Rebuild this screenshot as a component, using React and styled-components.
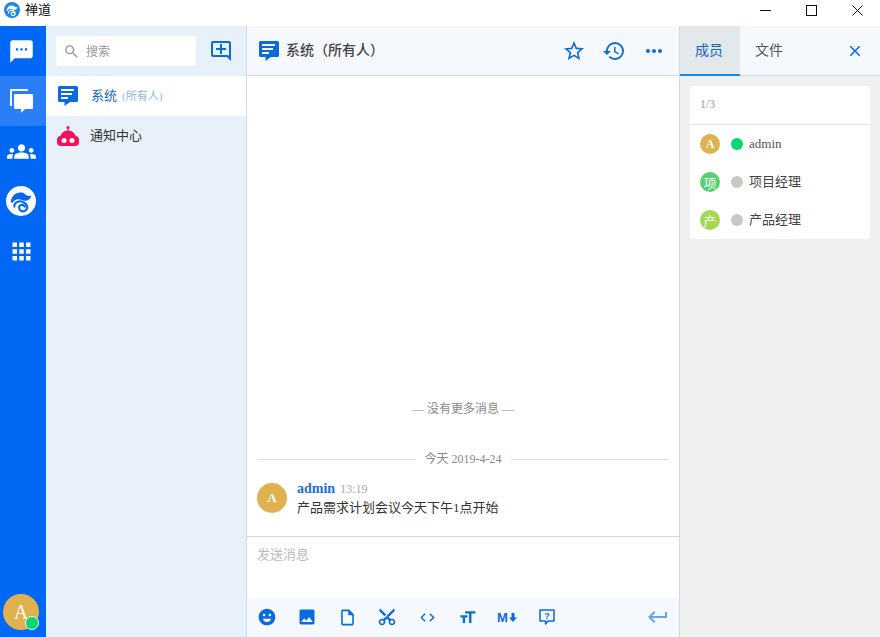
import React from "react";
import styled, { createGlobalStyle } from "styled-components";
import {
  MdSms,
  MdGroups,
  MdApps,
  MdSearch,
  MdOutlineAddComment,
  MdStarBorder,
  MdHistory,
  MdMoreHoriz,
  MdClose,
  MdEmojiEmotions,
  MdImage,
  MdOutlineInsertDriveFile,
  MdContentCut,
  MdCode,
  MdFormatSize,
  MdKeyboardReturn,
} from "react-icons/md";

const FONT = `"Liberation Serif", "Noto Sans CJK SC", serif`;
const BLUE = "#0b6bdc";

const GlobalStyle = createGlobalStyle`
  html, body { margin: 0; padding: 0; height: 100%; overflow: hidden; }
  body { font-family: ${FONT}; font-size: 13px; color: #333; background: #fff; }
  * { box-sizing: border-box; }
`;

const Window = styled.div`
  width: 880px;
  height: 637px;
  display: flex;
  flex-direction: column;
`;

const TitleBar = styled.div`
  height: 26px;
  flex: none;
  display: flex;
  align-items: flex-start;
  padding-left: 4px;
  background: #fff;
`;

const TitleLogo = styled.div`
  display: flex;
  margin-top: 2px;
`;

const TitleText = styled.span`
  margin-left: 5px;
  font-size: 13px;
  line-height: 20px;
  color: #111;
`;

const WindowButtons = styled.div`
  margin-left: auto;
  display: flex;
  height: 100%;
`;

const WindowButton = styled.div`
  width: 46px;
  height: 21px;
  display: flex;
  align-items: center;
  justify-content: center;
`;

const Body = styled.div`
  flex: 1;
  display: flex;
  min-height: 0;
`;

const NavBar = styled.nav`
  width: 46px;
  flex: none;
  background: #0068f5;
  display: flex;
  flex-direction: column;
`;

const NavItem = styled.div`
  width: 46px;
  height: 50px;
  padding-right: 4px;
  display: flex;
  align-items: center;
  justify-content: center;
  color: #fff;
  background: ${(p) => (p.$active ? "#2a7ff6" : "transparent")};
`;

const NavUser = styled.div`
  margin: auto 0 7px 3px;
  width: 36px;
  height: 36px;
  border-radius: 50%;
  background: #e0b24f;
  color: #fff;
  font-size: 20px;
  display: flex;
  align-items: center;
  justify-content: center;
  position: relative;
`;

const NavStatus = styled.span`
  position: absolute;
  right: 0;
  bottom: 0;
  width: 14px;
  height: 14px;
  border-radius: 50%;
  background: #00d96f;
  border: 1.5px solid #fff;
`;

const ListPanel = styled.aside`
  width: 201px;
  flex: none;
  background: #e8f0fa;
  border-right: 1px solid #d5d8dc;
  display: flex;
  flex-direction: column;
`;

const SearchRow = styled.div`
  height: 50px;
  display: flex;
  align-items: center;
  padding: 0 13px 0 10px;
  justify-content: space-between;
`;

const SearchBox = styled.div`
  width: 140px;
  height: 30px;
  background: #fff;
  border-radius: 3px;
  display: flex;
  align-items: center;
  padding-left: 7px;
  gap: 6px;
  color: #999;
  font-size: 12px;
`;

const ChatRow = styled.div`
  height: 40px;
  display: flex;
  align-items: center;
  padding-left: ${(p) => (p.$active ? 12 : 11)}px;
  background: ${(p) => (p.$active ? "#fff" : "transparent")};
`;

const ChatLabel = styled.div`
  margin-left: ${(p) => p.$gap}px;
  display: flex;
  align-items: baseline;
  padding-bottom: 4px;
`;

const ChatName = styled.span`
  font-size: 13px;
  color: ${(p) => (p.$active ? "#1565c0" : "#333")};
`;

const ChatNote = styled.span`
  margin-left: 5px;
  font-size: 11px;
  color: #8db6e8;
`;

const ChatPanel = styled.main`
  width: 433px;
  flex: none;
  display: flex;
  flex-direction: column;
  border-right: 1px solid #d5d8dc;
  background: #fff;
`;

const ChatHeader = styled.header`
  height: 50px;
  flex: none;
  background: #f5f9fd;
  border-bottom: 1px solid #d5d8dc;
  display: flex;
  align-items: center;
  padding: 0 13px 0 12px;
`;

const ChatTitle = styled.h1`
  margin: 0 0 0 7px;
  padding-bottom: 4px;
  font-size: 14px;
  font-weight: 500;
  color: #444;
`;

const HeaderActions = styled.div`
  margin-left: auto;
  display: flex;
  align-items: center;
  gap: 16px;
  color: ${BLUE};
`;

const Messages = styled.section`
  flex: 1;
  min-height: 0;
  display: flex;
  flex-direction: column;
  justify-content: flex-end;
  padding: 0 10px 18px;
`;

const NoMore = styled.div`
  text-align: center;
  color: #888;
  font-size: 12px;
  line-height: 16px;
`;

const DateLine = styled.div`
  display: flex;
  align-items: center;
  margin-top: 34px;
  color: #888;
  font-size: 12px;
  line-height: 16px;
  gap: 9px;
  &::before,
  &::after {
    content: "";
    flex: 1;
    height: 1px;
    background: #dcdfe2;
  }
`;

const Message = styled.div`
  display: flex;
  margin-top: 13px;
  gap: 10px;
`;

const Avatar = styled.div`
  width: ${(p) => p.$size}px;
  height: ${(p) => p.$size}px;
  flex: none;
  border-radius: 50%;
  background: ${(p) => p.$color};
  color: #fff;
  font-size: ${(p) => p.$font}px;
  font-weight: ${(p) => (p.$bold ? 700 : 400)};
  display: flex;
  align-items: center;
  justify-content: center;
`;

const MessageAvatar = styled(Avatar)`
  margin-top: 3px;
`;

const MessageHead = styled.div`
  display: flex;
  align-items: baseline;
  gap: 5px;
  line-height: 18px;
`;

const Sender = styled.span`
  color: #1a6fd8;
  font-weight: 700;
  font-size: 14px;
`;

const Time = styled.span`
  color: #aaa;
  font-size: 12px;
`;

const MessageText = styled.div`
  font-size: 13px;
  line-height: 20px;
  color: #333;
`;

const Composer = styled.div`
  height: 101px;
  flex: none;
  border-top: 1px solid #d5d8dc;
  display: flex;
  flex-direction: column;
`;

const Placeholder = styled.div`
  flex: 1;
  padding: 9px 10px;
  color: #bbb;
  font-size: 13px;
  line-height: 18px;
`;

const Toolbar = styled.div`
  height: 39px;
  flex: none;
  background: #f5f9fd;
  display: flex;
  align-items: center;
  color: ${BLUE};
  padding-bottom: 1px;
`;

const ToolButton = styled.div`
  width: 40px;
  display: flex;
  align-items: center;
  justify-content: center;
`;

const ScissorsIcon = styled(MdContentCut)`
  transform: rotate(-90deg);
`;

const MarkdownMark = styled.span`
  display: inline-flex;
  align-items: center;
  gap: 1px;
  font-family: "Liberation Sans", sans-serif;
  font-weight: 700;
  font-size: 13px;
`;

const SendButton = styled.div`
  margin-left: auto;
  margin-right: 9px;
  display: flex;
  color: #6ba3ea;
`;

const SidePanel = styled.aside`
  flex: 1;
  background: #f0f0f0;
  display: flex;
  flex-direction: column;
`;

const Tabs = styled.div`
  height: 50px;
  flex: none;
  display: flex;
  align-items: stretch;
  background: #f5f9fd;
  border-bottom: 1px solid #d5d8dc;
`;

const Tab = styled.div`
  width: 60px;
  display: flex;
  align-items: center;
  justify-content: center;
  padding: 0 2px 2px 0;
  font-size: 14px;
  margin-bottom: -1px;
  color: ${(p) => (p.$active ? "#1565c0" : "#555")};
  background: ${(p) => (p.$active ? "#e3e8ec" : "transparent")};
  border-bottom: 2px solid ${(p) => (p.$active ? "#0c8fe6" : "transparent")};
`;

const TabClose = styled.div`
  margin-left: auto;
  width: 50px;
  display: flex;
  align-items: center;
  justify-content: center;
  color: ${BLUE};
`;

const MemberCard = styled.div`
  margin: 10px;
  background: #fff;
  border-radius: 3px;
`;

const MemberCount = styled.div`
  height: 39px;
  padding: 0 0 2px 10px;
  display: flex;
  align-items: center;
  color: #bbb;
  font-size: 12px;
  font-weight: 700;
  border-bottom: 1px solid #dfe1e3;
`;

const MemberRow = styled.div`
  height: 38px;
  display: flex;
  align-items: center;
  padding-left: 10px;
`;

const StatusDot = styled.span`
  width: 12px;
  height: 12px;
  border-radius: 50%;
  margin: 0 6px 0 11px;
  background: ${(p) => (p.$online ? "#00d96f" : "#c8c8c8")};
`;

const MemberName = styled.span`
  font-size: 13px;
  padding-bottom: 4px;
  color: #444;
`;

const MemberLatin = styled.span`
  font-size: 13px;
  color: #555;
`;

// zentao swirl logo
const Logo = ({ size, bg, fg }) => (
  <svg width={size} height={size} viewBox="0 0 32 32">
    <circle cx="16" cy="16" r="16" fill={bg} />
    <path
      d="M5 17C6 10 11 6 17 7c4 1 5 5 10 3-1 5-6 7-10 5-4-2-8-1-10 3z"
      fill={fg}
    />
    <path
      d="M9 22c-1-4 5-7 9-5 5 2 6 7 3 9-3 2-7 1-7-3 0-3 4-4 6-1"
      fill="none"
      stroke={fg}
      strokeWidth="2.2"
      strokeLinecap="round"
    />
  </svg>
);

// message bubble with three lines of different length
const MessageIcon = () => (
  <svg width="20" height="20" viewBox="0 0 20 20">
    <path
      fillRule="evenodd"
      fill={BLUE}
      d="M1.500 0h17A1.500 1.500 0 0 1 20 1.500v13a1.500 1.500 0 0 1-1.500 1.500H12l-5.500 4v-4h-5A1.500 1.500 0 0 1 0 14.500v-13A1.500 1.500 0 0 1 1.500 0zM3 3v2h13V3zM3 7v2h11V7zM3 11v2h7v-2z"
    />
  </svg>
);

const Robot = () => (
  <svg width="22" height="20" viewBox="0 0 22 20">
    <circle cx="11" cy="1.500" r="1.500" fill="#f50f58" />
    <rect x="10.400" y="2" width="1.200" height="4" fill="#f50f58" />
    <path d="M3 12a8 7.500 0 0 1 16 0v3H3z" fill="#f50f58" />
    <rect x="0" y="10" width="22" height="10" rx="4" fill="#f50f58" />
    <circle cx="7" cy="14.500" r="2.500" fill="#fff" />
    <circle cx="15" cy="14.500" r="2.500" fill="#fff" />
  </svg>
);

const Stacked = () => (
  <svg width="28" height="28" viewBox="0 0 28 28" fill="#fff">
    <path d="M3 2h18v2H5v15H3z" opacity="0.95" />
    <path d="M8 7h17a1 1 0 0 1 1 1v13a1 1 0 0 1-1 1h-7l-4 4v-4H8a1 1 0 0 1-1-1V8a1 1 0 0 1 1-1z" />
  </svg>
);

const QuestionBox = () => (
  <svg width="18" height="18" viewBox="0 0 18 18" fill="none" stroke="currentColor">
    <path d="M2 2h14v11h-6l-2.500 3v-3H2z" strokeWidth="1.500" strokeLinejoin="round" />
    <text
      x="9"
      y="11"
      fontSize="9"
      fontWeight="700"
      textAnchor="middle"
      fill="currentColor"
      stroke="none"
      fontFamily="Liberation Sans"
    >
      ?
    </text>
  </svg>
);

const DownArrow = () => (
  <svg width="8" height="9" viewBox="0 0 8 9" fill="currentColor">
    <path d="M2.500 0h3v4.500H8L4 9 0 4.500h2.500z" />
  </svg>
);

const App = () => (
  <Window>
    <GlobalStyle />
    <TitleBar>
      <TitleLogo>
        <Logo size={16} bg="#1b87e6" fg="#fff" />
      </TitleLogo>
      <TitleText>禅道</TitleText>
      <WindowButtons>
        <WindowButton>
          <svg width="11" height="11" viewBox="0 0 11 11">
            <path d="M0 5.500h11" stroke="#111" />
          </svg>
        </WindowButton>
        <WindowButton>
          <svg width="11" height="11" viewBox="0 0 11 11">
            <rect x="0.500" y="0.500" width="10" height="10" fill="none" stroke="#111" />
          </svg>
        </WindowButton>
        <WindowButton>
          <svg width="11" height="11" viewBox="0 0 11 11">
            <path d="M0.500 0.500l10 10M10.500 0.500l-10 10" stroke="#111" />
          </svg>
        </WindowButton>
      </WindowButtons>
    </TitleBar>
    <Body>
      <NavBar>
        <NavItem>
          <MdSms size={27} />
        </NavItem>
        <NavItem $active>
          <Stacked />
        </NavItem>
        <NavItem>
          <MdGroups size={29} />
        </NavItem>
        <NavItem>
          <Logo size={30} bg="#fff" fg="#0068f5" />
        </NavItem>
        <NavItem>
          <MdApps size={27} />
        </NavItem>
        <NavUser>
          A
          <NavStatus />
        </NavUser>
      </NavBar>
      <ListPanel>
        <SearchRow>
          <SearchBox>
            <MdSearch size={17} />
            搜索
          </SearchBox>
          <MdOutlineAddComment size={24} color={BLUE} />
        </SearchRow>
        <ChatRow $active>
          <MessageIcon />
          <ChatLabel $gap={13}>
            <ChatName $active>系统</ChatName>
            <ChatNote>(所有人)</ChatNote>
          </ChatLabel>
        </ChatRow>
        <ChatRow>
          <Robot />
          <ChatLabel $gap={11}>
            <ChatName>通知中心</ChatName>
          </ChatLabel>
        </ChatRow>
      </ListPanel>
      <ChatPanel>
        <ChatHeader>
          <MessageIcon />
          <ChatTitle>系统（所有人）</ChatTitle>
          <HeaderActions>
            <MdStarBorder size={24} />
            <MdHistory size={24} />
            <MdMoreHoriz size={24} />
          </HeaderActions>
        </ChatHeader>
        <Messages>
          <NoMore>— 没有更多消息 —</NoMore>
          <DateLine>今天 2019-4-24</DateLine>
          <Message>
            <MessageAvatar $size={30} $color="#e0b24f" $font={13} $bold>
              A
            </MessageAvatar>
            <div>
              <MessageHead>
                <Sender>admin</Sender>
                <Time>13:19</Time>
              </MessageHead>
              <MessageText>产品需求计划会议今天下午1点开始</MessageText>
            </div>
          </Message>
        </Messages>
        <Composer>
          <Placeholder>发送消息</Placeholder>
          <Toolbar>
            <ToolButton>
              <MdEmojiEmotions size={20} />
            </ToolButton>
            <ToolButton>
              <MdImage size={20} />
            </ToolButton>
            <ToolButton>
              <MdOutlineInsertDriveFile size={19} />
            </ToolButton>
            <ToolButton>
              <ScissorsIcon size={20} />
            </ToolButton>
            <ToolButton>
              <MdCode size={17} />
            </ToolButton>
            <ToolButton>
              <MdFormatSize size={19} />
            </ToolButton>
            <ToolButton>
              <MarkdownMark>
                M
                <DownArrow />
              </MarkdownMark>
            </ToolButton>
            <ToolButton>
              <QuestionBox />
            </ToolButton>
            <SendButton>
              <MdKeyboardReturn size={24} />
            </SendButton>
          </Toolbar>
        </Composer>
      </ChatPanel>
      <SidePanel>
        <Tabs>
          <Tab $active>成员</Tab>
          <Tab>文件</Tab>
          <TabClose>
            <MdClose size={18} />
          </TabClose>
        </Tabs>
        <MemberCard>
          <MemberCount>1/3</MemberCount>
          <MemberRow>
            <Avatar $size={20} $color="#e0b24f" $font={12} $bold>
              A
            </Avatar>
            <StatusDot $online />
            <MemberLatin>admin</MemberLatin>
          </MemberRow>
          <MemberRow>
            <Avatar $size={20} $color="#53d36b" $font={13}>
              项
            </Avatar>
            <StatusDot />
            <MemberName>项目经理</MemberName>
          </MemberRow>
          <MemberRow>
            <Avatar $size={20} $color="#a2d94d" $font={13}>
              产
            </Avatar>
            <StatusDot />
            <MemberName>产品经理</MemberName>
          </MemberRow>
        </MemberCard>
      </SidePanel>
    </Body>
  </Window>
);

export default App;
